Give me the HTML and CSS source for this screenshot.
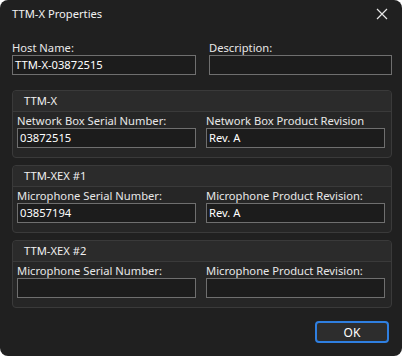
FILE: index.html
```html
<!DOCTYPE html>
<html lang="en">
<head>
<meta charset="UTF-8">
<title>TTM-X Properties</title>
<link rel="stylesheet" href="styles.css">
</head>
<body>

<div class="window">
  <div class="titlebar">
    <span class="title">TTM-X Properties</span>
    <svg class="close" width="12" height="12" viewBox="0 0 12 12">
      <path d="M1 1 L11 11 M11 1 L1 11" stroke="#e6e6e6" stroke-width="1.2" fill="none"/>
    </svg>
  </div>

  <div class="top-fields">
    <div class="field">
      <label>Host Name:</label>
      <div class="input">TTM-X-03872515</div>
    </div>
    <div class="field">
      <label>Description:</label>
      <div class="input"></div>
    </div>
  </div>

  <div class="group">
    <div class="group-head">TTM-X</div>
    <div class="group-body">
      <div class="field">
        <label>Network Box Serial Number:</label>
        <div class="input">03872515</div>
      </div>
      <div class="field">
        <label>Network Box Product Revision</label>
        <div class="input">Rev. A</div>
      </div>
    </div>
  </div>

  <div class="group">
    <div class="group-head">TTM-XEX #1</div>
    <div class="group-body">
      <div class="field">
        <label>Microphone Serial Number:</label>
        <div class="input">03857194</div>
      </div>
      <div class="field">
        <label>Microphone Product Revision:</label>
        <div class="input">Rev. A</div>
      </div>
    </div>
  </div>

  <div class="group">
    <div class="group-head">TTM-XEX #2</div>
    <div class="group-body">
      <div class="field">
        <label>Microphone Serial Number:</label>
        <div class="input"></div>
      </div>
      <div class="field">
        <label>Microphone Product Revision:</label>
        <div class="input"></div>
      </div>
    </div>
  </div>

  <div class="buttons">
    <button class="ok">OK</button>
  </div>
</div>

</body>
</html>
```

FILE: styles.css
```css
body {
  margin: 0;
  background-color: #ffffff;
  font-family: "Noto Sans", "Open Sans", sans-serif;
  font-size: 11.2px;
}
.window {
  width: 402px;
  height: 356px;
  box-sizing: border-box;
  padding: 0 10px 0 12px;
  background-color: #202020;
  border-radius: 8px;
  color: #ffffff;
  display: flex;
  flex-direction: column;
}
.titlebar {
  height: 28px;
  display: flex;
  align-items: center;
  justify-content: space-between;
}
.title {
  line-height: 16px;
  color: #f2f2f2;
}
.close {
  margin-right: 4px;
}
label {
  display: block;
  line-height: 16px;
  padding-top: 1px;
  margin-bottom: -1px;
  color: #e8e8e8;
  white-space: nowrap;
}
.input {
  height: 20px;
  box-sizing: border-box;
  border: 1px solid #6f6f6f;
  background-color: #1c1c1c;
  padding-left: 2px;
  line-height: 18px;
  color: #ffffff;
}
.top-fields {
  margin-top: 11px;
  display: grid;
  grid-template-columns: 184px 183px;
  column-gap: 13px;
}
.group {
  margin-top: 15px;
  border: 1px solid #3a3a3a;
  border-radius: 4px;
  background-color: #262626;
}
.group + .group {
  margin-top: 7px;
}
.group-head {
  height: 20px;
  line-height: 20px;
  padding-left: 11px;
  background-color: #2b2b2b;
  border-bottom: 1px solid #3a3a3a;
  border-radius: 4px 4px 0 0;
  color: #f0f0f0;
}
.group-body {
  display: grid;
  grid-template-columns: 179px 179px;
  column-gap: 10px;
  padding: 0 6px 9px 4px;
}
.buttons {
  margin-top: 13px;
  display: flex;
  justify-content: flex-end;
  padding-right: 3px;
}
.ok {
  width: 74px;
  height: 22px;
  border: 2px solid #2f7fe0;
  border-radius: 4px;
  background-color: #2d2d2d;
  color: #ffffff;
  font-family: inherit;
  font-size: 12px;
  padding: 0;
}
```
